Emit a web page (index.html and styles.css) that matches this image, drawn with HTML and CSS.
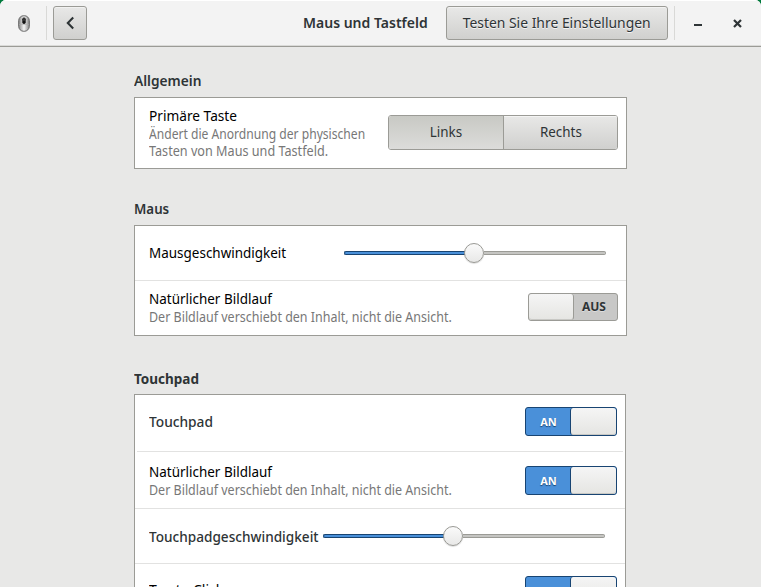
FILE: index.html
```html
<!DOCTYPE html>
<html lang="de">
<head>
<meta charset="utf-8">
<title>Maus und Tastfeld</title>
<link rel="stylesheet" href="styles.css">
</head>
<body>
<div class="window">
  <header class="titlebar">
    <svg class="app-icon" width="12" height="17" viewBox="0 0 12 17"><defs><linearGradient id="m" x2="1" y2="0"><stop stop-color="#888"/><stop offset=".5" stop-color="#f4f4f4"/><stop offset="1" stop-color="#888"/></linearGradient></defs><rect x=".7" y=".7" width="10.6" height="15.6" rx="5" fill="url(#m)" stroke="#666"/><path d="M1 9.5h10M6 1v8" stroke="#aaa" stroke-width=".6"/><rect x="4.3" y="2.5" width="3.4" height="6.5" rx="1.7" fill="#111"/><path d="M6 3v3" stroke="#555"/></svg>
    <span class="divider"></span>
    <button class="button back"><svg width="10" height="14" viewBox="0 0 10 14"><path d="M8.2 1.5 2.8 7l5.4 5.5" fill="none" stroke="#2e3436" stroke-width="2.1"/></svg></button>
    <h1><span class="t">Maus und Tastfeld</span></h1>
    <button class="button test"><span class="t">Testen Sie Ihre Einstellungen</span></button>
    <span class="divider right"></span>
    <svg class="minimize" width="8" height="3"><path d="M0 1h8" stroke="#2e3436" stroke-width="2"/></svg>
    <svg class="close" width="9" height="9" viewBox="0 0 9 9"><path d="m1 1 7 7M8 1 1 8" stroke="#2e3436" stroke-width="2.2"/></svg>
  </header>
  <main>
    <h2><span class="t w-general">Allgemein</span></h2>
    <section class="card">
      <div class="row r-primary">
        <div class="label"><div class="name"><span class="t w-primary">Primäre Taste</span></div><div class="hint"><span class="t w-h1">Ändert die Anordnung der physischen</span><br><span class="t w-h2">Tasten von Maus und Tastfeld.</span></div></div>
        <div class="segmented"><button class="active"><span class="t w-seg">Links</span></button><button><span class="t w-seg">Rechts</span></button></div>
      </div>
    </section>
    <h2 class="h-mouse"><span class="t w-maus">Maus</span></h2>
    <section class="card">
      <div class="row r-speed">
        <div class="name"><span class="t w-speed">Mausgeschwindigkeit</span></div>
        <div class="slider"><i class="fill"></i><i class="knob"></i><i class="rest"></i></div>
      </div>
      <div class="row r-scroll">
        <div class="label"><div class="name"><span class="t w-scroll">Natürlicher Bildlauf</span></div><div class="hint"><span class="t w-h3">Der Bildlauf verschiebt den Inhalt, nicht die Ansicht.</span></div></div>
        <div class="switch off"><i></i><b>AUS</b></div>
      </div>
    </section>
    <h2 class="h-pad"><span class="t w-pad">Touchpad</span></h2>
    <section class="card pad">
      <div class="row r-pad">
        <div class="name dark"><span class="t w-padname">Touchpad</span></div>
        <div class="switch"><b>AN</b><i></i></div>
      </div>
      <div class="row r-padscroll">
        <div class="label"><div class="name"><span class="t w-scroll">Natürlicher Bildlauf</span></div><div class="hint"><span class="t w-h3">Der Bildlauf verschiebt den Inhalt, nicht die Ansicht.</span></div></div>
        <div class="switch"><b>AN</b><i></i></div>
      </div>
      <div class="row r-padspeed">
        <div class="name dark"><span class="t w-padspeed">Touchpadgeschwindigkeit</span></div>
        <div class="slider wide"><i class="fill"></i><i class="knob"></i><i class="rest"></i></div>
      </div>
      <div class="row r-tap">
        <div class="name"><span class="t w-tap">Tap to Click</span></div>
        <div class="switch"><b>ON</b><i></i></div>
      </div>
    </section>
  </main>
</div>
</body>
</html>
```
FILE: styles.css
```css
* { box-sizing: border-box; }
body { margin: 0; height: 587px; overflow: hidden; background: #007a3d; color: #2e3436; font: 14px/18px "Noto Sans", sans-serif; }
button { font: inherit; color: inherit; padding: 0; margin: 0; }
h1, h2 { margin: 0; font-size: 14px; line-height: 18px; font-weight: 600; }
.window { height: 587px; border-radius: 6px 6px 0 0; overflow: hidden; background: #e8e8e7; }
.titlebar { height: 47px; display: flex; align-items: center; background: #f3f3f3; border-bottom: 1px solid #9b9b96; box-shadow: inset 0 1px #fff, inset 0 -1px #dadad8; }
.app-icon { margin-left: 18px; flex: none; }
.divider { width: 1px; height: 34px; background: #d9d9d7; margin-left: 16px; flex: none; }
.button { height: 34px; flex: none; border: 1px solid #9b9b96; border-radius: 3px; background: linear-gradient(#e8e8e7, #d0d0ce); box-shadow: inset 0 1px #f2f2f1; text-shadow: 0 1px #f4f4f4; display: flex; align-items: center; justify-content: center; }
.back { width: 34px; margin-left: 6px; }
h1 { width: 124px; margin-left: 216px; flex: none; }
.test { width: 222px; margin-left: 19px; }
.test .t { transform: scale(.993, 1.05); transform-origin: 50% 50%; }
.divider.right { margin-left: 6px; }
.minimize { margin: 5px 0 0 19px; flex: none; }
.close { margin: 0 0 0 31px; flex: none; }

.t { display: inline-block; white-space: nowrap; transform: scale(1, 1.05); transform-origin: 0 50%; }
.w-general { transform: scale(.98, 1.05); }
.w-primary { transform: scale(.978, 1.05); }
.w-h1 { transform: scale(.931, 1.04); }
.w-h2 { transform: scale(.972, 1.04); }
.w-h3 { transform: scale(.96, 1.04); }
.w-maus { transform: scale(.95, 1.05); }
.w-speed { transform: scale(.962, 1.05); }
.w-scroll { transform: scale(.962, 1.05); }
.w-padname { transform: scale(.98, 1.03); }
.w-padspeed { transform: scale(.972, 1.03); }
.segmented .w-seg { transform: translateY(-1px) scale(.96, 1.05); transform-origin: 50% 50%; }

main { width: 493px; margin-left: 134px; padding-top: 25px; }
.h-mouse { margin-top: 31px; }
.h-pad { margin-top: 34px; margin-bottom: 6px; font-weight: 700; }
.h-pad .w-pad { transform: scale(.965, 1.03); }
h2 { margin-bottom: 7px; }
.card { background: #fff; border: 1px solid #9b9b96; }
.row { display: flex; align-items: center; justify-content: space-between; padding: 0 8px 0 14px; }
.row + .row { border-top: 1px solid #e2e2e1; }
.name { color: #000; height: 18px; white-space: nowrap; }
.name.dark { color: #2e3436; font-weight: 500; }
.hint { margin-top: 1px; color: #777; font-size: 13px; line-height: 17px; white-space: nowrap; }
.label { flex: 1; min-width: 0; }
.r-primary { height: 70px; }
.r-primary .label { padding-top: 1px; }
.segmented { display: flex; flex: none; width: 230px; height: 35px; border: 1px solid #9b9b96; border-radius: 3px; overflow: hidden; margin-top: -1px; text-shadow: 0 1px #f4f4f4; }
.segmented button { flex: 1; border: 0; background: linear-gradient(#e8e8e7, #d0d0ce); box-shadow: inset 0 1px #f4f4f3; }
.segmented button.active { flex: none; width: 115px; border-right: 1px solid #9b9b96; background: linear-gradient(#c8c9c4, #dcdcda); box-shadow: none; }
.r-speed { height: 54px; padding-right: 20px; }
.r-scroll { height: 55px; }
.r-scroll .label { padding-bottom: 1px; }
.pad { width: 492px; height: 201px; }
.r-pad { height: 57px; margin: 0 2px; padding: 0 6px 2px 12px; border-bottom: 1px solid #e2e2e1; }
.r-pad .switch { margin-top: -1px; }
.row.r-padscroll { height: 56px; border-top: 0; }
.r-padscroll .label { padding-top: 2px; }
.row.r-padspeed { height: 55px; padding-right: 20px; }
.row.r-padspeed .name { width: 174px; margin-top: 2px; }
.row.r-tap { height: 55px; padding-bottom: 2px; }

.slider { display: flex; flex: none; align-items: center; width: 262px; height: 22px; }
.slider i { flex: none; }
.slider.wide { width: 282px; }
.fill { width: 121px; height: 4px; background: #4a90d9; border: 1px solid #184472; border-right: 0; border-radius: 2px 0 0 2px; }
.knob { width: 20px; height: 20px; border: 1px solid #999994; border-radius: 50%; background: linear-gradient(#fafafa, #e8e8e7); box-shadow: 0 1px 1px #0002; margin-left: -1px; }
.rest { width: 122px; height: 4px; background: #c5c5c2; border: 1px solid #9b9b96; border-left: 0; border-radius: 0 2px 2px 0; }
.wide .rest { width: 142px; }

.switch { display: flex; flex: none; width: 92px; height: 29px; border: 1px solid #184472; border-radius: 3px; background: #4a90d9; color: #fff; font-size: 11px; line-height: 28px; text-shadow: 0 1px 1px #184472; }
.switch b { width: 44px; padding-left: 1px; text-align: center; font-weight: 700; }
.switch i { width: 46px; border-left: 1px solid #184472; border-radius: 3px; background: linear-gradient(#f5f5f5, #e5e5e2); box-shadow: inset 0 -1px #c8c8c4; }
.switch.off { width: 90px; height: 28px; margin-top: -2px; border-color: #9b9b96; background: #c8c8c7; color: #2e3436; font-size: 12px; line-height: 26px; text-shadow: 0 1px #ddd; }
.switch.off b { padding: 0 3px 0 0; }
.switch.off i { border-left: 0; border-right: 1px solid #9b9b96; }
```
